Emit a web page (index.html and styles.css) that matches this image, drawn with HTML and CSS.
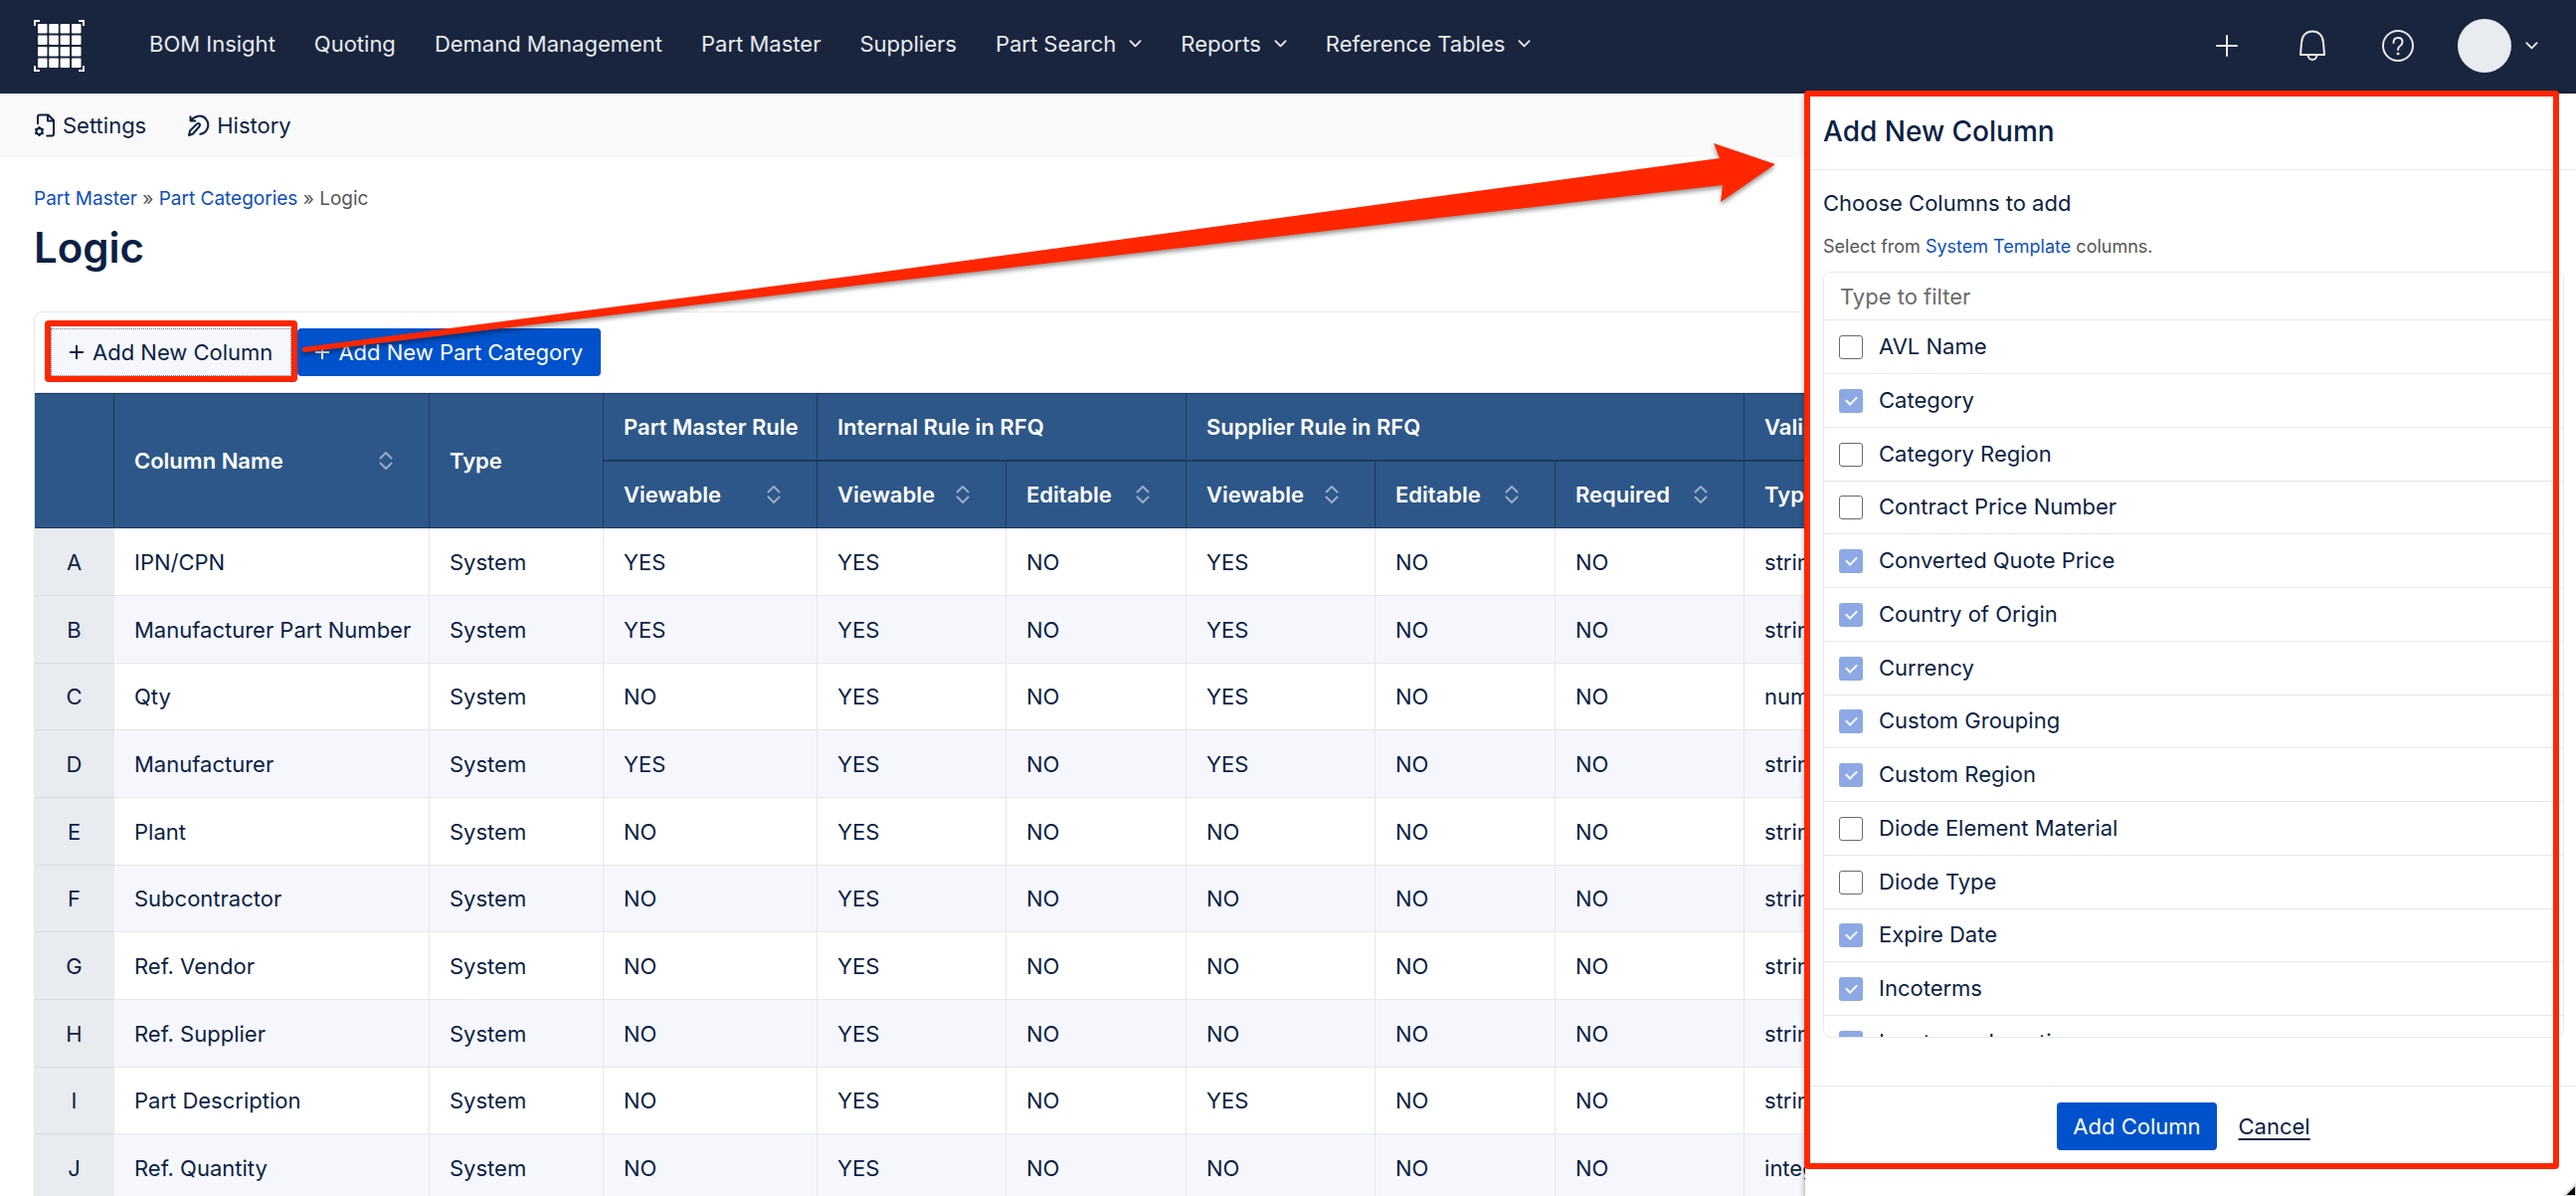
FILE: index.html
```
<!DOCTYPE html>
<html lang="en">
<head>
  <meta charset="utf-8">
  <title>Logic - Part Categories</title>
  <link rel="stylesheet" href="styles.css">
</head>
<body>
  <!-- Shared icons -->
  <svg class="sprite" aria-hidden="true">
    <symbol id="chevron" viewBox="0 0 14 10"><path d="M1.5 2l5.5 5.5L12.500 2" fill="none" stroke="currentColor" stroke-width="2" stroke-linecap="round" stroke-linejoin="round"/></symbol>
    <symbol id="plus" viewBox="0 0 22 22"><path d="M11 1v20M1 11h20" fill="none" stroke="currentColor" stroke-width="2" stroke-linecap="round"/></symbol>
    <symbol id="plus-small" viewBox="0 0 14 14"><path d="M7 0v14M0 7h14" fill="none" stroke="currentColor" stroke-width="2"/></symbol>
    <symbol id="sort" viewBox="0 0 14 18"><path d="M1.500 6.500L7 1l5.500 5.500M1.500 11.500L7 17l5.500-5.500" fill="none" stroke="currentColor" stroke-width="2" stroke-linecap="round" stroke-linejoin="round"/></symbol>
  </svg>

  <header class="topbar">
    <a href="#" class="logo" aria-label="Home">
      <svg width="52" height="52" viewBox="0 0 52 52">
        <path d="M1 6V1H6M45 1h5V6M50 46v5H45M6 51H1V46" fill="none" stroke="#fff" stroke-width="2"/>
        <g fill="#fff">
          <rect x="4" y="4" width="9.500" height="9.500" rx="1"/><rect x="15.300" y="4" width="9.500" height="9.500" rx="1"/><rect x="26.600" y="4" width="9.500" height="9.500" rx="1"/><rect x="38" y="4" width="9.500" height="9.500" rx="1"/>
          <rect x="4" y="15.500" width="9.500" height="9.500" rx="1"/><rect x="15.300" y="15.500" width="9.500" height="9.500" rx="1"/><rect x="26.600" y="15.500" width="9.500" height="9.500" rx="1"/><rect x="38" y="15.500" width="9.500" height="9.500" rx="1"/>
          <rect x="4" y="27" width="9.500" height="9.500" rx="1"/><rect x="15.300" y="27" width="9.500" height="9.500" rx="1"/><rect x="26.600" y="27" width="9.500" height="9.500" rx="1"/><rect x="38" y="27" width="9.500" height="9.500" rx="1"/>
          <rect x="4" y="38.500" width="9.500" height="9.500" rx="1"/><rect x="15.300" y="38.500" width="9.500" height="9.500" rx="1"/><rect x="26.600" y="38.500" width="9.500" height="9.500" rx="1"/><rect x="38" y="38.500" width="9.500" height="9.500" rx="1"/>
        </g>
      </svg>
    </a>
    <nav class="main-nav">
      <a href="#">BOM Insight</a>
      <a href="#">Quoting</a>
      <a href="#">Demand Management</a>
      <a href="#">Part Master</a>
      <a href="#">Suppliers</a>
      <a href="#">Part Search <svg class="chevron"><use href="#chevron"/></svg></a>
      <a href="#">Reports <svg class="chevron"><use href="#chevron"/></svg></a>
      <a href="#">Reference Tables <svg class="chevron"><use href="#chevron"/></svg></a>
    </nav>
    <div class="top-actions">
      <button class="icon-btn" aria-label="Create"><svg width="22" height="22"><use href="#plus"/></svg></button>
      <button class="icon-btn" aria-label="Notifications">
        <svg width="32" height="32" viewBox="0 0 32 32" fill="none" stroke="currentColor" stroke-width="2" stroke-linejoin="round">
          <path d="M4 25l1-12C5.500 5.500 10 1.500 16 1.500S26.500 5.500 27 13l1 12z"/>
          <path d="M11.500 25c0 3 2 5 4.500 5s4.500-2 4.500-5"/>
        </svg>
      </button>
      <button class="icon-btn" aria-label="Help">
        <svg width="32" height="32" viewBox="0 0 32 32" fill="none" stroke="currentColor" stroke-width="2" stroke-linecap="round">
          <circle cx="16" cy="16" r="15"/>
          <path d="M11.500 13c0-3 1.800-5 4.500-5s4.500 1.800 4.500 4.300c0 2.200-1.200 3.200-2.700 4.200-1.300.9-1.800 1.600-1.800 3.500"/>
          <circle cx="16" cy="24" r="1" fill="currentColor" stroke-width="1"/>
        </svg>
      </button>
      <button class="user-btn" aria-label="Account">
        <span class="avatar"></span>
        <svg class="chevron"><use href="#chevron"/></svg>
      </button>
    </div>
  </header>

  <div class="subbar">
    <a href="#">
      <svg width="22" height="24" viewBox="0 0 22 24" fill="none" stroke="currentColor" stroke-width="2" stroke-linejoin="round">
        <path d="M4 11V3.500Q4 1.500 6 1.500h8.500L20 7v13.500q0 2-2 2h-5.500M14 1.500V7.500h6"/>
        <circle cx="5.500" cy="18" r="3"/>
        <path d="M5.500 13v2M5.500 21v2M1.200 15.500l1.700 1M8.100 19.500l1.700 1M1.200 20.500l1.700-1M8.100 16.500l1.700-1"/>
      </svg>
      <span>Settings</span>
    </a>
    <a href="#">
      <svg width="22" height="24" viewBox="0 0 22 24" fill="none" stroke="currentColor" stroke-width="2" stroke-linejoin="round">
        <path d="M2.500 2.500v5h5.500M3 7C7 2 14 1 18 5.500c4.500 5.500 2 14.500-6.500 15.500"/>
        <path d="M1 22l1-4.500L9 10.500q1.500-1 2.500 0t0 2.500L5 20.500z"/>
      </svg>
      <span>History</span>
    </a>
  </div>

  <main class="page">
    <nav class="breadcrumb">
      <a href="#">Part Master</a> » <a href="#">Part Categories</a> » <span>Logic</span>
    </nav>
    <h1>Logic</h1>

    <section class="card">
      <div class="toolbar">
        <button class="btn btn-light marked"><svg width="14" height="14"><use href="#plus-small"/></svg>Add New Column</button>
        <button class="btn btn-primary"><svg width="14" height="14"><use href="#plus-small"/></svg>Add New Part Category</button>
      </div>
      <table>
        <colgroup>
          <col class="c-letter"><col class="c-name"><col class="c-type"><col class="c-master">
          <col class="c-view"><col class="c-edit"><col class="c-supplier"><col class="c-edit"><col class="c-supplier"><col>
        </colgroup>
        <thead>
          <tr>
            <th rowspan="2"></th>
            <th rowspan="2"><div class="sortable">Column Name <svg><use href="#sort"/></svg></div></th>
            <th rowspan="2">Type</th>
            <th>Part Master Rule</th>
            <th colspan="2">Internal Rule in RFQ</th>
            <th colspan="3">Supplier Rule in RFQ</th>
            <th>Validation</th>
          </tr>
          <tr>
            <th><div class="sortable">Viewable <svg><use href="#sort"/></svg></div></th>
            <th><div class="sortable">Viewable <svg><use href="#sort"/></svg></div></th>
            <th><div class="sortable">Editable <svg><use href="#sort"/></svg></div></th>
            <th><div class="sortable">Viewable <svg><use href="#sort"/></svg></div></th>
            <th><div class="sortable">Editable <svg><use href="#sort"/></svg></div></th>
            <th><div class="sortable">Required <svg><use href="#sort"/></svg></div></th>
            <th>Type</th>
          </tr>
        </thead>
        <tbody>
          <tr><th>A</th><td>IPN/CPN</td><td>System</td><td>YES</td><td>YES</td><td>NO</td><td>YES</td><td>NO</td><td>NO</td><td>string</td></tr>
          <tr><th>B</th><td>Manufacturer Part Number</td><td>System</td><td>YES</td><td>YES</td><td>NO</td><td>YES</td><td>NO</td><td>NO</td><td>string</td></tr>
          <tr><th>C</th><td>Qty</td><td>System</td><td>NO</td><td>YES</td><td>NO</td><td>YES</td><td>NO</td><td>NO</td><td>number</td></tr>
          <tr><th>D</th><td>Manufacturer</td><td>System</td><td>YES</td><td>YES</td><td>NO</td><td>YES</td><td>NO</td><td>NO</td><td>string</td></tr>
          <tr><th>E</th><td>Plant</td><td>System</td><td>NO</td><td>YES</td><td>NO</td><td>NO</td><td>NO</td><td>NO</td><td>string</td></tr>
          <tr><th>F</th><td>Subcontractor</td><td>System</td><td>NO</td><td>YES</td><td>NO</td><td>NO</td><td>NO</td><td>NO</td><td>string</td></tr>
          <tr><th>G</th><td>Ref. Vendor</td><td>System</td><td>NO</td><td>YES</td><td>NO</td><td>NO</td><td>NO</td><td>NO</td><td>string</td></tr>
          <tr><th>H</th><td>Ref. Supplier</td><td>System</td><td>NO</td><td>YES</td><td>NO</td><td>NO</td><td>NO</td><td>NO</td><td>string</td></tr>
          <tr><th>I</th><td>Part Description</td><td>System</td><td>NO</td><td>YES</td><td>NO</td><td>YES</td><td>NO</td><td>NO</td><td>string</td></tr>
          <tr><th>J</th><td>Ref. Quantity</td><td>System</td><td>NO</td><td>YES</td><td>NO</td><td>NO</td><td>NO</td><td>NO</td><td>integer</td></tr>
        </tbody>
      </table>
    </section>
  </main>

  <!-- Add column drawer -->
  <aside class="drawer">
    <h2>Add New Column</h2>
    <div class="drawer-body">
      <label for="filter" class="drawer-label">Choose Columns to add</label>
      <p>Select from <a href="#">System Template</a> columns.</p>
      <div class="picker">
        <input type="text" id="filter" placeholder="Type to filter">
        <ul>
          <li><label><input type="checkbox"> AVL Name</label></li>
          <li><label><input type="checkbox" checked disabled> Category</label></li>
          <li><label><input type="checkbox"> Category Region</label></li>
          <li><label><input type="checkbox"> Contract Price Number</label></li>
          <li><label><input type="checkbox" checked disabled> Converted Quote Price</label></li>
          <li><label><input type="checkbox" checked disabled> Country of Origin</label></li>
          <li><label><input type="checkbox" checked disabled> Currency</label></li>
          <li><label><input type="checkbox" checked disabled> Custom Grouping</label></li>
          <li><label><input type="checkbox" checked disabled> Custom Region</label></li>
          <li><label><input type="checkbox"> Diode Element Material</label></li>
          <li><label><input type="checkbox"> Diode Type</label></li>
          <li><label><input type="checkbox" checked disabled> Expire Date</label></li>
          <li><label><input type="checkbox" checked disabled> Incoterms</label></li>
          <li><label><input type="checkbox" checked disabled> Incoterms Location</label></li>
        </ul>
      </div>
    </div>
    <div class="drawer-footer">
      <button class="btn btn-primary">Add Column</button>
      <button class="btn btn-link">Cancel</button>
    </div>
  </aside>

  <!-- Callout arrow from the button to the drawer -->
  <svg class="arrow" width="1500" height="230" viewBox="0 0 1500 230" aria-hidden="true">
    <path d="M5 209L560 137 1429 19 1423 4 1485 25 1430 63 1432 46 560 147 6 214q-4-2-1-5z" fill="#ff2600"/>
  </svg>

  <svg class="cursor" width="14" height="14" viewBox="0 0 14 14" aria-hidden="true">
    <path d="M2 14L14 2V14z" fill="#000" stroke="#ddd" stroke-width="2"/>
  </svg>
</body>
</html>
```
FILE: styles.css
```
:root {
  --navy: #18253d;
  --text: #0b1f44;
  --muted: #555555;
  --link: #0d4fc0;
  --primary: #0052cc;
  --table-head: #2d5788;
  --table-head-line: #1b3a60;
  --line: #e6e8eb;
  --mark: #ff2600;
}

* {
  box-sizing: border-box;
}

body {
  position: relative;
  display: flex;
  flex-direction: column;
  height: 100vh;
  margin: 0;
  overflow: hidden;
  font-family: Inter, "Liberation Sans", sans-serif;
  font-size: 22px;
  line-height: 28px;
  color: var(--text);
  background: #fff;
}

a {
  color: var(--link);
  text-decoration: none;
}

button, input {
  font: inherit;
  color: inherit;
}

button {
  border: 0;
  padding: 0;
  background: none;
  cursor: pointer;
}

svg {
  flex: none;
}

.sprite {
  position: absolute;
  width: 0;
  height: 0;
}

/* Header */
.topbar {
  flex: none;
  display: flex;
  align-items: center;
  height: 94px;
  padding: 0 38px 2px 34px;
  background: var(--navy);
  color: #e8ebf0;
}

.logo {
  display: flex;
}

.main-nav {
  display: flex;
  gap: 39px;
  margin-left: 64px;
  padding-bottom: 4px;
}

.main-nav a {
  display: flex;
  align-items: center;
  gap: 13px;
  color: inherit;
}

.chevron {
  width: 13px;
  height: 10px;
}

.top-actions {
  display: flex;
  align-items: center;
  gap: 54px;
  margin-left: auto;
}

.icon-btn {
  display: flex;
  justify-content: center;
  width: 32px;
}

.user-btn {
  display: flex;
  align-items: center;
  gap: 14px;
  margin-left: -10px;
}

.avatar {
  width: 54px;
  height: 54px;
  border-radius: 50%;
  background: #e8ebf0;
}

.subbar {
  flex: none;
  display: flex;
  align-items: center;
  gap: 42px;
  height: 64px;
  padding: 0 34px;
  background: #f9f9f9;
}

.subbar a {
  display: flex;
  align-items: center;
  gap: 7px;
  color: var(--text);
}

/* Page */
.page {
  padding: 29px 34px;
}

.breadcrumb {
  font-size: 19px;
  line-height: 26px;
  color: var(--muted);
}

h1 {
  margin: 9px 0 37px;
  font-size: 42px;
  line-height: 54px;
  font-weight: 600;
}

.card {
  border: 1px solid var(--line);
  border-radius: 8px 8px 0 0;
}

.toolbar {
  display: flex;
  gap: 6px;
  padding: 16px;
  border-bottom: 1px solid var(--line);
}

.btn {
  display: flex;
  align-items: center;
  gap: 9px;
  height: 48px;
  padding: 0 16px;
  border-radius: 4px;
}

.btn-primary {
  background: var(--primary);
  color: #fff;
}

.toolbar .btn {
  padding: 0 18px;
}

.btn-light {
  background: #f5f7fd;
  border: 1px dotted #6b778c;
  border-radius: 0;
}

.btn-link {
  padding: 0 14px;
  text-decoration: underline;
  text-underline-offset: 4px;
}

.marked {
  position: relative;
}

.marked::after {
  content: "";
  position: absolute;
  inset: -9px -7px -7px;
  border: 6px solid var(--mark);
  border-radius: 4px;
}

/* Table */
table {
  width: 100%;
  table-layout: fixed;
  border-collapse: separate;
  border-spacing: 0;
}

.c-letter { width: 80px; }
.c-name { width: 317px; }
.c-type { width: 175px; }
.c-master { width: 215px; }
.c-view { width: 190px; }
.c-edit { width: 181px; }
.c-supplier { width: 190px; }

th, td {
  height: 68px;
  padding: 0 0 0 20px;
  text-align: left;
  white-space: nowrap;
  border-right: 1px solid var(--line);
  border-bottom: 1px solid var(--line);
}

thead th {
  height: 67px;
  background: var(--table-head);
  color: #fff;
  font-weight: 600;
  border-color: var(--table-head-line);
}

thead tr:first-child th {
  height: 69px;
  border-top: 1px solid var(--table-head-line);
}

thead tr:first-child th:not([rowspan]) {
  border-bottom-width: 2px;
}

tbody tr:nth-child(3n) > * {
  height: 67px;
}

tbody tr:nth-child(even) {
  background: #f5f7fd;
}

tbody th {
  padding: 0;
  text-align: center;
  font-weight: 400;
  background: #e8ebef;
  border-color: #d8dbe0;
  border-right-color: #e8ebef;
}

.sortable {
  display: flex;
  align-items: center;
  justify-content: space-between;
  padding-right: 36px;
}

.sortable svg {
  width: 14px;
  height: 18px;
  color: #9aadc6;
}

/* Drawer */
.drawer {
  position: absolute;
  top: 94px;
  right: 0;
  bottom: 0;
  display: flex;
  flex-direction: column;
  width: 775px;
  background: #fff;
  box-shadow: 0 2px 6px rgba(0, 0, 0, 0.4);
  clip-path: inset(-3px 0 0 -10px);
}

.drawer::after {
  content: "";
  position: absolute;
  inset: -3px 17px 27px -1px;
  border: 6px solid var(--mark);
  border-radius: 4px;
  pointer-events: none;
}

.drawer h2 {
  margin: 0;
  padding: 20px 18px;
  font-size: 28px;
  line-height: 36px;
  font-weight: 500;
  border-bottom: 1px solid var(--line);
}

.drawer-body {
  flex: 1;
  display: flex;
  flex-direction: column;
  min-height: 0;
  padding: 19px 12px 48px 18px;
}

.drawer-body p {
  margin: 17px 0 12px;
  font-size: 18px;
  line-height: 26px;
  color: var(--muted);
}

.drawer-label {
  line-height: 28px;
}

.picker {
  flex: 1;
  display: flex;
  flex-direction: column;
  min-height: 0;
  overflow: hidden;
  border: 1px solid var(--line);
  border-radius: 8px;
}

.picker > input {
  flex: none;
  height: 48px;
  padding: 0 16px;
  border: 0;
  border-bottom: 1px solid var(--line);
  outline: none;
}

.picker > input::placeholder {
  color: #6b6b6b;
}

.picker ul {
  flex: 1;
  min-height: 0;
  margin: 0;
  padding: 0;
  overflow: hidden;
  list-style: none;
}

.picker li {
  height: 54px;
  border-bottom: 1px solid var(--line);
}

.picker li:nth-child(4n) {
  height: 53px;
}

.picker label {
  display: flex;
  align-items: center;
  gap: 16px;
  height: 100%;
  padding: 0 15px 2px;
}

.picker input[type="checkbox"] {
  appearance: none;
  width: 24px;
  height: 24px;
  margin: 2px 0 0;
  border: 1px solid #6b6b6b;
  border-radius: 3px;
  background: #fff;
}

.picker input[type="checkbox"]:checked {
  border: 0;
  background: #8ca9e6;
  display: flex;
  align-items: center;
  justify-content: center;
}

.picker input[type="checkbox"]:checked::after {
  content: "";
  width: 5px;
  height: 9px;
  margin-bottom: 3px;
  border: solid #fff;
  border-width: 0 2px 2px 0;
  transform: rotate(45deg);
}

.drawer-footer {
  display: flex;
  justify-content: center;
  gap: 8px;
  padding: 16px 0 46px;
  border-top: 1px solid var(--line);
}

/* Overlays */
.arrow {
  position: absolute;
  top: 140px;
  left: 300px;
  filter: drop-shadow(0 3px 2px rgba(0, 0, 0, 0.4));
  pointer-events: none;
}

.cursor {
  position: absolute;
  right: 0;
  bottom: 0;
}
```
